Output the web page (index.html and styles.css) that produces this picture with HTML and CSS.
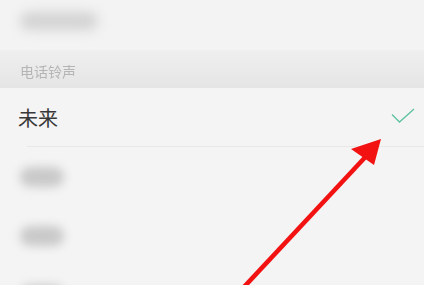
FILE: index.html
```html
<!DOCTYPE html>
<html lang="zh">
<head>
<meta charset="utf-8">
<link rel="stylesheet" href="styles.css">
</head>
<body>
<div class="screen">
  <div class="row row-top"><span class="blur blur-wide"></span></div>
  <div class="section">电话铃声</div>
  <div class="row row-selected">
    <span class="name">未来</span>
    <svg class="check" width="26" height="18" viewBox="0 0 26 18"><polyline points="2,6.5 9.5,14 24,1" fill="none" stroke="#5fc29c" stroke-width="1.3"/></svg>
  </div>
  <div class="row"><span class="blur"></span></div>
  <div class="row"><span class="blur"></span></div>
  <div class="row"><span class="blur"></span></div>
  <svg class="arrow" width="424" height="285" viewBox="0 0 424 285">
    <line x1="244" y1="287" x2="371" y2="151" stroke="#f21212" stroke-width="4.6"/>
    <polygon points="381,139 351,149 374,165" fill="#f21212"/>
  </svg>
</div>
</body>
</html>
```
FILE: styles.css
```css
html, body { margin: 0; padding: 0; }
body { background: #f4f4f4; font-family: "Noto Sans CJK SC", "Noto Sans", sans-serif; }
.screen { position: relative; width: 424px; height: 285px; overflow: hidden; background: #f4f4f4; }
.row { height: 59px; display: flex; align-items: center; padding: 0 10px 0 18px; }
.row-top { height: 50px; background: #f3f3f3; align-items: flex-start; padding-top: 12px; box-sizing: border-box; }
.section { height: 38px; box-sizing: border-box; padding: 13px 0 0 20px; font-size: 14px; line-height: 16px; color: #b5b5b5; background: linear-gradient(#efefef, #e5e5e5); filter: blur(0.5px); }
.row-selected { justify-content: space-between; position: relative; }
.row-selected::after { content: ""; position: absolute; left: 27px; right: 0; bottom: 0; height: 1px; background: #e8e8e8; }
.name { font-size: 20px; color: #383838; letter-spacing: 0; }
.check { margin-right: -2px; margin-top: -2px; }
.blur { display: block; width: 44px; height: 20px; background: #c9c9c9; border-radius: 10px; filter: blur(5px); margin-left: 2px; }
.blur-wide { width: 78px; height: 18px; background: #d3d3d3; filter: blur(6px); }
.arrow { position: absolute; left: 0; top: 0; }
```
